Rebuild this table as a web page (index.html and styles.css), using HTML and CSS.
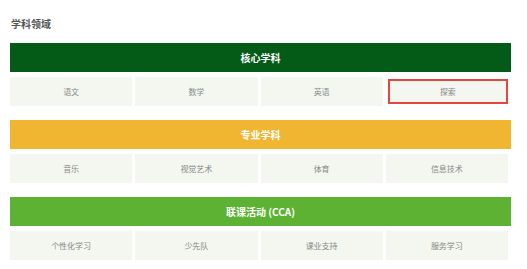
FILE: index.html
```html
<!DOCTYPE html>
<html lang="zh">
<head>
    <meta charset="UTF-8">
    <meta name="viewport" content="width=device-width, initial-scale=1.0">
    <title>学科领域</title>
    <link rel="stylesheet" href="styles.css">
</head>
<body>
    <div class="subjects">
        <h2>学科领域</h2>

        <div class="group">
            <div class="group-title core">核心学科</div>
            <div class="group-items">
                <div class="item">语文</div>
                <div class="item">数学</div>
                <div class="item">英语</div>
                <div class="item active">探索</div>
            </div>
        </div>

        <div class="group">
            <div class="group-title major">专业学科</div>
            <div class="group-items">
                <div class="item">音乐</div>
                <div class="item">视觉艺术</div>
                <div class="item">体育</div>
                <div class="item">信息技术</div>
            </div>
        </div>

        <div class="group">
            <div class="group-title cca">联课活动 (CCA)</div>
            <div class="group-items">
                <div class="item">个性化学习</div>
                <div class="item">少先队</div>
                <div class="item">课业支持</div>
                <div class="item">服务学习</div>
            </div>
        </div>
    </div>
</body>
</html>
```

FILE: styles.css
```css
body {
    margin: 0;
    padding: 0;
    background-color: #ffffff;
    font-family: "Noto Sans CJK SC", "Noto Sans", sans-serif;
}
.subjects {
    padding: 17px 16px 0 10px;
}
.subjects h2 {
    margin: 0 0 12px 1px;
    font-size: 10px;
    line-height: 14px;
    font-weight: bold;
    color: #555555;
}
.group {
    margin-bottom: 14px;
}
.group-title {
    height: 29px;
    line-height: 29px;
    text-align: center;
    color: #ffffff;
    font-size: 10px;
    font-weight: bold;
}
.group-title.core {
    background-color: #045b18;
}
.group-title.major {
    background-color: #f0b632;
}
.group-title.cca {
    background-color: #5db233;
}
.group-items {
    display: grid;
    grid-template-columns: repeat(4, 1fr);
    gap: 3px;
    margin-top: 5px;
    padding-right: 3px;
}
.item {
    height: 29px;
    line-height: 29px;
    text-align: center;
    background-color: #f3f7ef;
    color: #888888;
    font-size: 8px;
    box-sizing: border-box;
}
.item.active {
    height: 25px;
    line-height: 21px;
    margin: 2px 0 0 2px;
    border: 2px solid #e4473f;
}
```
